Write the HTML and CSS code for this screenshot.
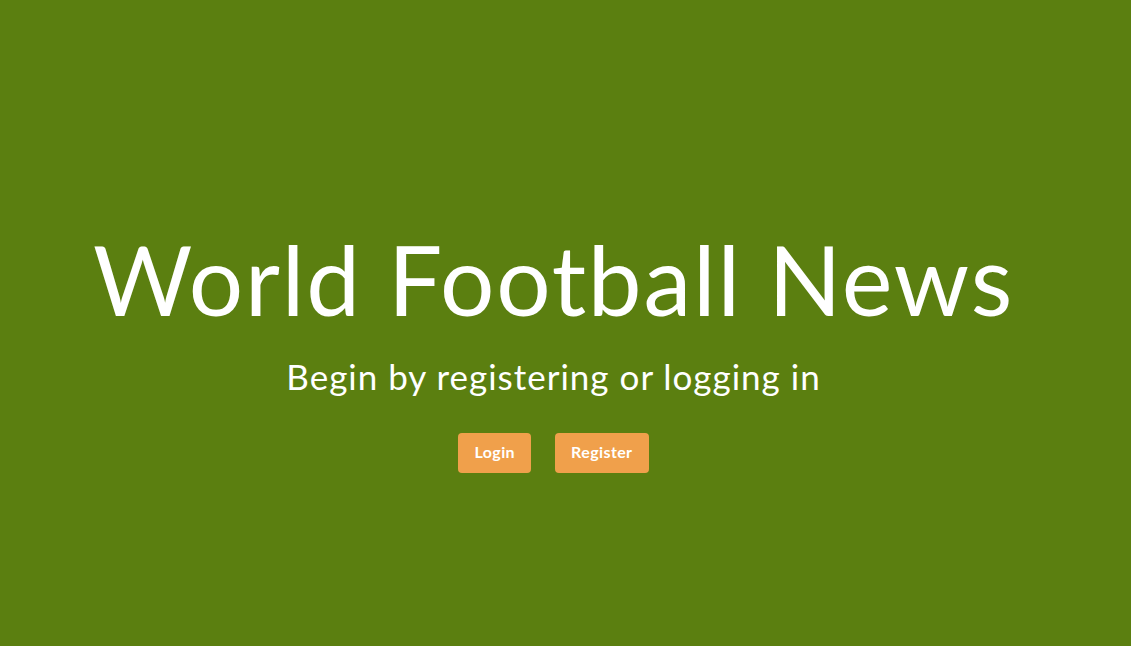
FILE: index.html
```html
<!DOCTYPE html>
<html lang="en">
<head>
<meta charset="utf-8">
<title>World Football News</title>
<link rel="stylesheet" href="styles.css">
</head>
<body>
<main class="hero">
  <h1 class="hero-title">World Football News</h1>
  <p class="hero-lead">Begin by registering or logging in</p>
  <div class="hero-actions">
    <a class="btn" href="#">Login</a>
    <a class="btn" href="#">Register</a>
  </div>
</main>
</body>
</html>
```
FILE: styles.css
```css
html, body {
  margin: 0;
  padding: 0;
  height: 100%;
}
body {
  background: #5b7f10;
  color: #fff;
  font-family: Lato, "Open Sans", sans-serif;
}
.hero {
  display: flex;
  flex-direction: column;
  align-items: center;
  padding: 223px 24px 0 0;
}
.hero-title {
  margin: 0;
  font-weight: 400;
  font-size: 96px;
  line-height: 112px;
  letter-spacing: 1.8px;
}
.hero-lead {
  margin: 19px 0 0;
  font-size: 35px;
  line-height: 44px;
  letter-spacing: 1px;
}
.hero-actions {
  display: flex;
  gap: 24px;
  margin-top: 35px;
}
.btn {
  display: flex;
  align-items: center;
  justify-content: center;
  box-sizing: border-box;
  height: 40px;
  padding: 0 16px 3px;
  background: #f0a04b;
  color: #fff;
  border-radius: 4px;
  font-weight: 700;
  font-size: 16px;
  letter-spacing: 0.4px;
  text-decoration: none;
}
```
